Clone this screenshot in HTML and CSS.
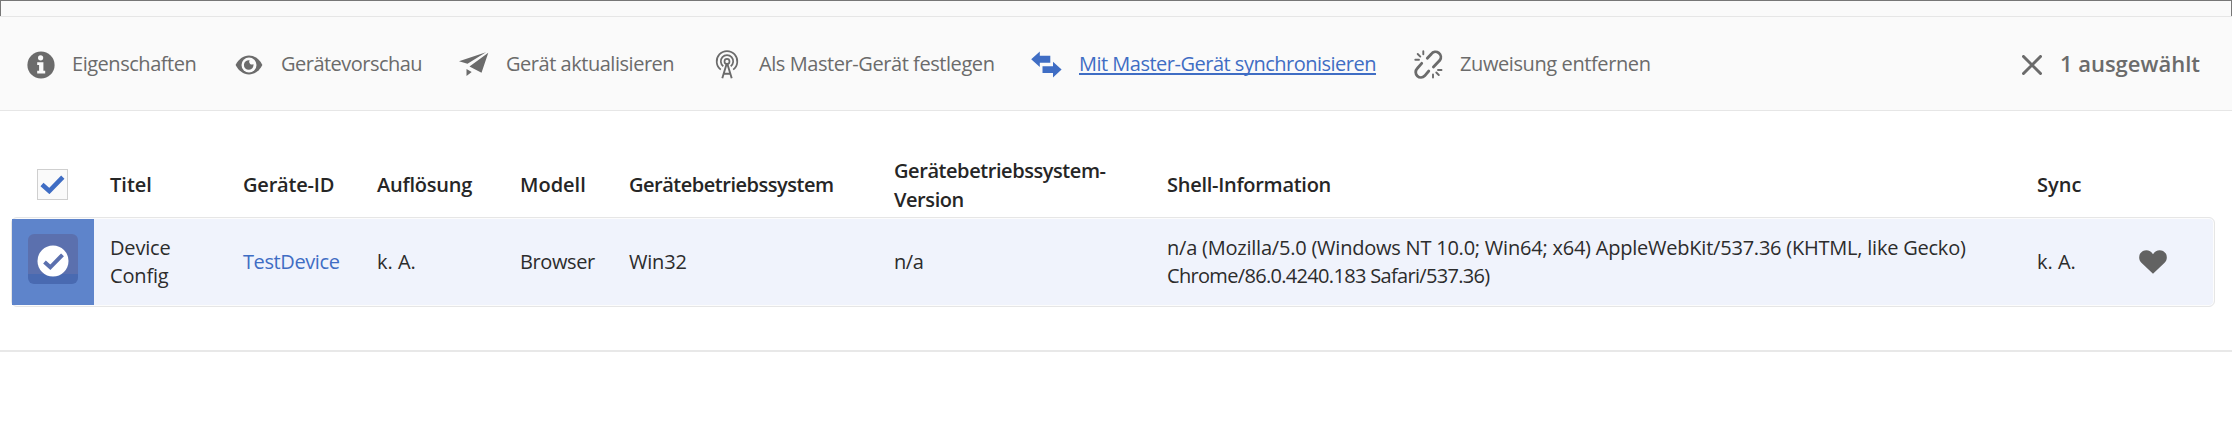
FILE: index.html
```
<!DOCTYPE html>
<html lang="de">
<head>
<meta charset="utf-8">
<title>Geräte</title>
<link rel="stylesheet" href="styles.css">
</head>
<body>
<div class="topbar"></div>
<nav class="toolbar">
  <a class="action a-info">
    <svg class="icon" width="28" height="28" viewBox="0 0 28 28"><circle cx="14" cy="14" r="13.6" fill="#6b6b6b"/><circle cx="13.6" cy="6.8" r="2.6" fill="#fafafa"/><path d="M10.2 11.2h6.2v8.6h1.8v2.8h-8v-2.8h1.9v-5.8h-1.9z" fill="#fafafa"/></svg>
    <span class="label t45">Eigenschaften</span>
  </a>
  <a class="action a-eye">
    <svg class="icon" width="28" height="20" viewBox="0 0 28 20"><path d="M.6 10C3.600 4.200 8.300.6 14 .6S24.400 4.200 27.400 10C24.400 15.800 19.700 19.400 14 19.400S3.600 15.800.6 10z" fill="#6b6b6b"/><circle cx="14" cy="10" r="7.500" fill="#fafafa"/><path d="M14.600 5.300a2.700 2.700 0 0 0 3.800 3.700A4.800 4.800 0 1 1 14.600 5.300z" fill="#6b6b6b"/></svg>
    <span class="label t49">Gerätevorschau</span>
  </a>
  <a class="action a-send">
    <svg class="icon" width="30" height="25" viewBox="0 0 30 25"><path d="M0 9.300 27 .3 8.500 11.700z M29.300.8 22.500 20.800 10.500 14.400z M7.500 17 12.700 19.900 7.500 24z" fill="#6b6b6b"/></svg>
    <span class="label t45">Gerät aktualisieren</span>
  </a>
  <a class="action a-master">
    <svg class="icon" width="24" height="29" viewBox="0 0 24 29" fill="none" stroke="#6b6b6b" stroke-width="1.700"><path d="M5.800 19.600a10.300 10.300 0 1 1 12.400 0M8.300 16.300a6.200 6.200 0 1 1 7.400 0"/><circle cx="12" cy="11.400" r="2.500"/><path d="M11.600 14 7.300 28.300M12.400 14 16.700 28.300M9 23.800h6" stroke-width="1.900"/></svg>
    <span class="label t41">Als Master-Gerät festlegen</span>
  </a>
  <a class="action a-sync active">
    <svg class="icon" width="31" height="27" viewBox="0 0 31 27"><path d="M.2 8.200 8.800.4v4.300h10.500v7H8.800V16zM11.500 15.200H22v-4.400L30.600 18.600 22 26.400v-4.300H11.500z" fill="#3f6dc4"/></svg>
    <span class="label t50">Mit Master-Gerät synchronisieren</span>
  </a>
  <a class="action a-unlink">
    <svg class="icon" width="29" height="29" viewBox="0 0 29 29" fill="none" stroke="#6b6b6b" stroke-width="2.800" stroke-linecap="round"><path d="M13.300 8.300 17.300 4a5 5 0 0 1 8.500 6.300L19.400 17M7.700 13.300 3.200 18.500a5 5 0 0 0 7.500 7.300L14.800 21"/><path d="M9.300 1.300V4.300M3.700 4 6.300 6.600M1.300 9.800H5M24 20H27.500M22.300 22.500 24.800 25M19 24.500V27.500" stroke-width="1.900"/></svg>
    <span class="label t37">Zuweisung entfernen</span>
  </a>
  <a class="selection">
    <svg class="icon" width="20" height="20" viewBox="0 0 20 20"><path d="M1.500 1.500 18.500 18.500M18.500 1.500 1.500 18.500" stroke="#6b6b6b" stroke-width="3" stroke-linecap="round"/></svg>
    <span class="count">1 ausgewählt</span>
  </a>
</nav>
<main class="content">
  <div class="grid head">
    <div class="selectall"><span class="checkbox"><svg width="25" height="19" viewBox="0 0 25 19"><path d="M2 9.500 9.300 16 22.800 2.200" fill="none" stroke="#3f6dc4" stroke-width="4.600"/></svg></span></div>
    <div>Titel</div>
    <div class="t20">Geräte-ID</div>
    <div class="t24">Auflösung</div>
    <div>Modell</div>
    <div class="t46">Gerätebetriebssystem</div>
    <div class="t41">Gerätebetriebssystem-<br>Version</div>
    <div class="t28">Shell-Information</div>
    <div>Sync</div>
    <div></div>
  </div>
  <div class="grid row">
    <div class="thumb"><span class="device"><svg width="32" height="32" viewBox="0 0 32 32"><circle cx="16" cy="16" r="15.500" fill="#fff"/><path d="M7.500 17 13.300 22.300 25.500 9.800" fill="none" stroke="#5b70ae" stroke-width="4"/></svg></span></div>
    <div class="t17">Device<br>Config</div>
    <div class="link t37">TestDevice</div>
    <div>k. A.</div>
    <div class="t37">Browser</div>
    <div class="t20">Win32</div>
    <div class="t41">n/a</div>
    <div><span class="t22">n/a (Mozilla/5.0 (Windows NT 10.0; Win64; x64) AppleWebKit/537.36 (KHTML, like Gecko)</span><br><span class="t64">Chrome/86.0.4240.183 Safari/537.36)</span></div>
    <div>k. A.</div>
    <div><svg class="heart" width="28" height="24" viewBox="0 0 28 24"><path d="M14 23.800 2.400 12.800C-.6 9.800-.1 5.800 1.200 3.600 4-.8 11-1 14 4.200 17-1 24-.8 26.800 3.600 28.100 5.800 28.600 9.800 25.600 12.800z" fill="#626262"/></svg></div>
  </div>
</main>
</body>
</html>
```
FILE: styles.css
```
* { box-sizing: border-box; }
body {
  margin: 0;
  height: 432px;
  overflow: hidden;
  background: #fff;
  color: #2c2c2c;
  font: 20px/28.5px "Open Sans", "Noto Sans", sans-serif;
}
.topbar {
  height: 16px;
  background: #fafafa;
  border: 1px solid #777;
  border-bottom: 0;
}
.toolbar {
  display: flex;
  align-items: center;
  height: 95px;
  padding: 0 32px 0 27px;
  background: #fafafa;
  border-top: 1px solid #e6e6e6;
  border-bottom: 1px solid #e6e6e6;
  color: #6b6b6b;
  white-space: nowrap;
}
.action, .selection { display: flex; align-items: center; height: 36px; }
.icon { flex: none; display: block; margin-top: 2px; }
.label { padding-top: 2px; }
.a-info { width: 208px; gap: 17px; }
.a-eye { width: 224px; gap: 18px; }
.a-send { width: 256px; gap: 17px; }
.a-master { width: 316px; gap: 20px; }
.a-sync { width: 383px; gap: 17px; }
.a-unlink { gap: 17px; }
.active { color: #3f6dc4; }
.active .label { text-decoration: underline; text-decoration-thickness: 1.5px; text-underline-offset: 2px; text-decoration-skip-ink: none; }
.selection { margin-left: auto; gap: 18px; }
.count { font-size: 22px; font-weight: 600; }
.content { height: 241px; padding: 40px 17px 0 11px; border-bottom: 2px solid #e8e8e8; }
.grid {
  display: grid;
  grid-template-columns: 98px 133px 134px 143px 109px 265px 273px 870px 102px 1fr;
  align-items: center;
  white-space: nowrap;
}
.head { height: 66px; padding: 3px 1px 0; font-weight: 600; color: #262626; }
.selectall { padding-left: 25px; }
.checkbox {
  display: flex;
  align-items: center;
  justify-content: center;
  width: 31px;
  height: 31px;
  margin-top: -3px;
  border: 1px solid #cfcfcf;
  background: #fafafa;
}
.row {
  height: 90px;
  border: 1px solid #e6e6e6;
  border-radius: 6px;
  background: #f0f3fc;
  box-shadow: inset 0 0 0 1px #fcfcfc;
}
.thumb {
  display: flex;
  align-items: center;
  width: 82px;
  height: 86px;
  padding-left: 16px;
  background: #5e84cb;
}
.device {
  display: flex;
  align-items: center;
  justify-content: center;
  width: 50px;
  height: 50px;
  margin-top: -7px;
  padding-top: 4px;
  border-radius: 6px;
  background: linear-gradient(#5b70ae 40px, #496ab1 40px);
}
.link { color: #3f6dc4; }
.heart { display: block; }
.t17 { letter-spacing: -.17px; }
.t20 { letter-spacing: -.2px; }
.t22 { letter-spacing: -.22px; }
.t24 { letter-spacing: -.24px; }
.t28 { letter-spacing: -.28px; }
.t37 { letter-spacing: -.4px; }
.t41 { letter-spacing: -.43px; }
.t45 { letter-spacing: -.47px; }
.t46 { letter-spacing: -.48px; }
.t49 { letter-spacing: -.52px; }
.t50 { letter-spacing: -.5px; }
.t64 { letter-spacing: -.68px; }
```
